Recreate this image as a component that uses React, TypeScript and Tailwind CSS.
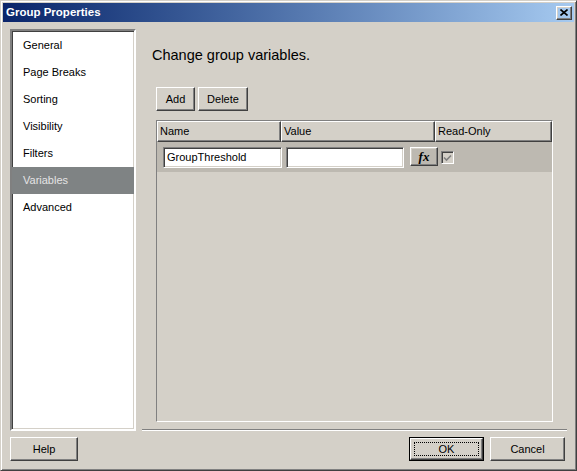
const raised =
  "border border-t-white border-l-white border-r-[#404040] border-b-[#404040] shadow-[inset_-1px_-1px_0_#808080,inset_1px_1px_0_#d4d0c8]";
const sunken =
  "border border-t-[#808080] border-l-[#808080] border-r-white border-b-white shadow-[inset_1px_1px_0_#404040,inset_-1px_-1px_0_#d4d0c8]";

const pages = ["General", "Page Breaks", "Sorting", "Visibility", "Filters", "Variables", "Advanced"];

function Button({ label, w, isDefault }: { label: string; w: string; isDefault?: boolean }) {
  if (isDefault) {
    return (
      <div className={`${w} h-[24px] border border-black`}>
        <div className={`${raised} h-full w-full flex items-center justify-center p-[3px]`}>
          <div className="w-full h-full border border-dotted border-black flex items-center justify-center">
            {label}
          </div>
        </div>
      </div>
    );
  }
  return <div className={`${raised} ${w} h-[24px] flex items-center justify-center`}>{label}</div>;
}

export default function App() {
  return (
    <div
      className="w-[577px] h-[471px] bg-[#d4d0c8] border border-t-[#d4d0c8] border-l-[#d4d0c8] border-r-[#404040] border-b-[#404040] shadow-[inset_1px_1px_0_#ffffff,inset_-1px_-1px_0_#808080] p-[2px] flex flex-col text-[11px] text-black"
      style={{ fontFamily: '"Liberation Sans", Arial, sans-serif' }}
    >
      {/* title bar */}
      <div className="h-[19px] flex items-center justify-between pl-[3px] pr-[2px] bg-gradient-to-r from-[#0a246a] to-[#a6caf0]">
        <span className="text-white font-bold text-[11.5px]">Group Properties</span>
        <div className={`${raised} w-[16px] h-[14px] flex items-center justify-center`}>
          <svg width="8" height="7" viewBox="0 0 8 7">
            <path d="M0.5 0.5 L7.5 6.5 M7.5 0.5 L0.5 6.5" stroke="#000" strokeWidth="1.6" />
          </svg>
        </div>
      </div>

      {/* body */}
      <div className="flex pt-[7px] pl-[7px]">
        <div className={`${sunken} border-2 w-[126px] h-[402px] bg-white pt-0`}>
          <div className="pt-[1px]">
            {pages.map((p) => (
              <div
                key={p}
                className={`h-[27px] pl-[11px] flex items-center ${
                  p === "Variables" ? "bg-[#7f8384] text-[#e4e4e4]" : ""
                }`}
              >
                {p}
              </div>
            ))}
          </div>
        </div>

        <div className="ml-[6px] w-[425px] flex flex-col">
          <div className="mt-[17px] pl-[10px] h-[18px] leading-[18px] text-[14.5px]">Change group variables.</div>

          <div className="mt-[23px] ml-[14px] flex gap-[3px]">
            <Button label="Add" w="w-[39px]" />
            <Button label="Delete" w="w-[50px]" />
          </div>

          <div className="mt-[9px] ml-[14px] w-[397px] h-[302px] border border-t-[#808080] border-l-[#808080] border-r-white border-b-white flex flex-col">
            <div className="flex h-[21px]">
              <div className={`${raised} w-[124px] flex items-center pl-[2px]`}>Name</div>
              <div className={`${raised} w-[154px] flex items-center pl-[2px]`}>Value</div>
              <div className={`${raised} w-[117px] flex items-center pl-[2px]`}>Read-Only</div>
            </div>
            <div className="h-[30px] bg-[#bdb9b1] flex items-start pt-[5px] pl-[6px]">
              <div className={`${sunken} w-[119px] h-[21px] bg-white flex items-center pl-[3px]`}>
                GroupThreshold
              </div>
              <div className={`${sunken} ml-[4px] w-[118px] h-[21px] bg-white`} />
              <div className={`${raised} ml-[6px] w-[28px] h-[19px] flex items-center justify-center`}>
                <span
                  className="italic font-bold text-[13px] leading-none"
                  style={{ fontFamily: '"Liberation Serif", "Times New Roman", serif' }}
                >
                  fx
                </span>
              </div>
              <div className={`${sunken} ml-[3px] mt-[4px] w-[13px] h-[13px] bg-[#d4d0c8] flex items-center justify-center`}>
                <svg width="9" height="8" viewBox="0 0 9 8">
                  <path d="M1 3.5 L3.5 6 L8 1.5" stroke="#808080" strokeWidth="1.6" fill="none" />
                </svg>
              </div>
            </div>
          </div>

          <div className="mt-[7px] h-[2px] border-t border-t-[#808080] border-b border-b-white" />
        </div>
      </div>

      {/* footer */}
      <div className="flex justify-between pt-[6px] pl-[7px] pr-[9px]">
        <Button label="Help" w="w-[68px]" />
        <div className="flex gap-[6px]">
          <Button label="OK" w="w-[75px]" isDefault />
          <Button label="Cancel" w="w-[75px]" />
        </div>
      </div>
    </div>
  );
}
